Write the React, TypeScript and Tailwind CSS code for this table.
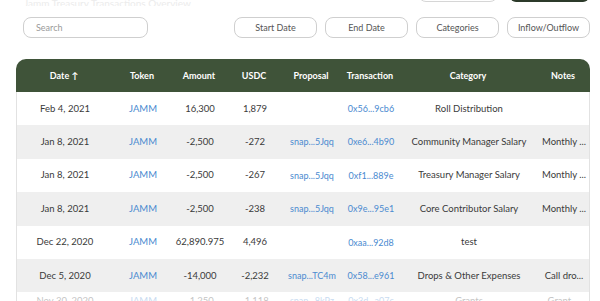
import { FC } from "react";

type Row = {
  date: string;
  amount: string;
  usdc: string;
  proposal: string;
  tx: string;
  category: string;
  notes: string;
};

const rows: Row[] = [
  { date: "Feb 4, 2021", amount: "16,300", usdc: "1,879", proposal: "", tx: "0x56...9cb6", category: "Roll Distribution", notes: "" },
  { date: "Jan 8, 2021", amount: "-2,500", usdc: "-272", proposal: "snap...5Jqq", tx: "0xe6...4b90", category: "Community Manager Salary", notes: "Monthly ..." },
  { date: "Jan 8, 2021", amount: "-2,500", usdc: "-267", proposal: "snap...5Jqq", tx: "0xf1...889e", category: "Treasury Manager Salary", notes: "Monthly ..." },
  { date: "Jan 8, 2021", amount: "-2,500", usdc: "-238", proposal: "snap...5Jqq", tx: "0x9e...95e1", category: "Core Contributor Salary", notes: "Monthly ..." },
  { date: "Dec 22, 2020", amount: "62,890.975", usdc: "4,496", proposal: "", tx: "0xaa...92d8", category: "test", notes: "" },
  { date: "Dec 5, 2020", amount: "-14,000", usdc: "-2,232", proposal: "snap...TC4m", tx: "0x58...e961", category: "Drops & Other Expenses", notes: "Call dro..." },
  { date: "Nov 30, 2020", amount: "-1,250", usdc: "-1,118", proposal: "snap...8kPz", tx: "0x3d...a07c", category: "Grants", notes: "Grant ..." },
];

const cols = "grid grid-cols-[96px_60px_54px_56px_58px_60px_136px_54px]";
const cell = "flex justify-center items-center whitespace-nowrap";

const App: FC = () => {
  return (
    <div className="w-[600px] h-[301px] overflow-hidden bg-white font-['Lato','Liberation_Sans',sans-serif] text-[#3a3a3a]">
      {/* scrolled-off header remnants */}
      <div className="h-[6px] overflow-hidden flex items-end justify-between pl-[24px] pr-[11px]">
        <span className="text-[10px] leading-none text-[#ececec] -mb-[2px] whitespace-nowrap">
          Jamm Treasury Transactions Overview
        </span>
        <div className="flex items-end gap-[12px] mb-[4px]">
          <div className="w-[80px] h-[24px] shrink-0 rounded-[8px] border border-[#d6d6d6]" />
          <div className="w-[79px] h-[24px] shrink-0 rounded-[6px] bg-[#2c3a2a]" />
        </div>
      </div>

      {/* filters */}
      <div className="mt-[11px] flex justify-between pl-[23px] pr-[10px]">
        <div className="w-[125px] h-[21px] rounded-[8px] border border-[#cfcfcf] flex items-center pl-[12px] text-[9px] text-[#9a9a9a]">
          Search
        </div>
        <div className="flex gap-[8px]">
          {["Start Date", "End Date", "Categories", "Inflow/Outflow"].map((b) => (
            <div
              key={b}
              className="w-[83px] h-[21px] rounded-[8px] border border-[#cfcfcf] flex items-center justify-center text-[9px] text-[#555]"
            >
              {b}
            </div>
          ))}
        </div>
      </div>

      {/* table */}
      <div className="mt-[21px] ml-[16px] w-[574px]">
        <div className={`${cols} h-[33px] rounded-t-[10px] bg-[#3f5339] text-white font-bold text-[9px]`}>
          <div className={cell}>Date ↑</div>
          <div className={cell}>Token</div>
          <div className={cell}>Amount</div>
          <div className={cell}>USDC</div>
          <div className={cell}>Proposal</div>
          <div className={cell}>Transaction</div>
          <div className={cell}>Category</div>
          <div className={cell}>Notes</div>
        </div>
        <div className="border-x border-[#e2e2e2] text-[9.5px]">
          {rows.map((r, i) => (
            <div
              key={i}
              className={`${cols} h-[33.4px] ${i % 2 === 1 ? "bg-[#efefef]" : "bg-white"} ${i === 6 ? "opacity-30 items-start pt-[2px]" : ""}`}
            >
              <div className={cell}>{r.date}</div>
              <div className={`${cell} text-[#4a8ad0]`}>JAMM</div>
              <div className={cell}>{r.amount}</div>
              <div className={cell}>{r.usdc}</div>
              <div className={`${cell} text-[#4a8ad0] text-[9px]`}>{r.proposal}</div>
              <div className={`${cell} text-[#4a8ad0] text-[9px]`}>{r.tx}</div>
              <div className={cell}>{r.category}</div>
              <div className={cell}>{r.notes}</div>
            </div>
          ))}
        </div>
      </div>
    </div>
  );
};

export default App;
